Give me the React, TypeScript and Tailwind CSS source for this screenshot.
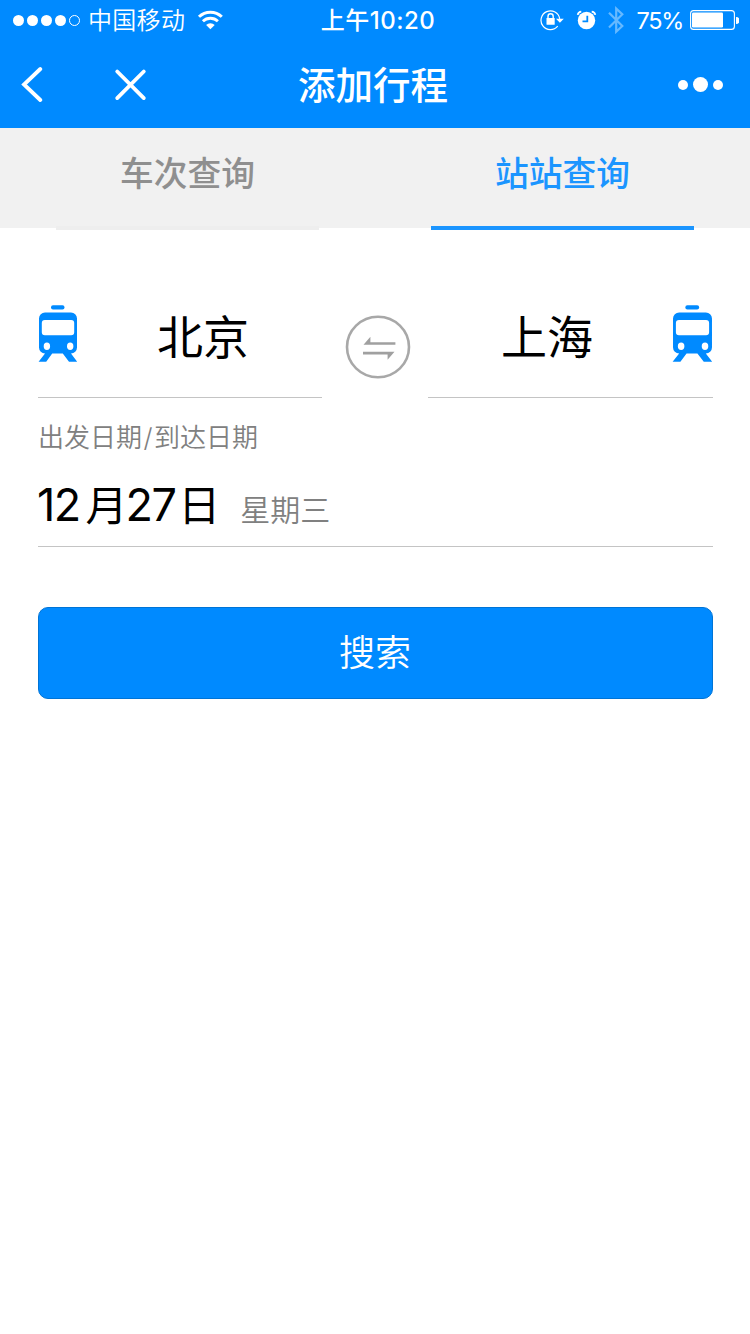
import React from "react";

const SANS = "font-['Inter','Noto_Sans_CJK_SC',sans-serif]";

function StatusBar() {
  return (
    <div className="grid h-10 grid-cols-3 items-center text-white">
      <div className="flex items-center pl-[12px]">
        <svg width="69" height="12" viewBox="0 0 69 12" fill="#fff">
          <circle cx="6.5" cy="6.5" r="5.5" />
          <circle cx="20.5" cy="6.5" r="5.5" />
          <circle cx="34.5" cy="6.5" r="5.5" />
          <circle cx="48.5" cy="6.5" r="5.5" />
          <circle cx="62.5" cy="6.5" r="5" fill="none" stroke="#fff" strokeWidth="1" />
        </svg>
        <span className="ml-[7px] pt-[2px] text-[24px] leading-[38px] tracking-[0.3px] font-[350]">中国移动</span>
        <svg className="ml-[12px]" width="26" height="20" viewBox="0 0 26 20" fill="none" stroke="#fff">
          <path d="M2 6.8a16.3 16.3 0 0 1 22.8 0" strokeWidth="3" />
          <path d="M5.9 11.3a10.7 10.7 0 0 1 15 0" strokeWidth="2.8" />
          <path d="M13.400 19.2l-4.3-4.2a6 6 0 0 1 8.6 0z" fill="#fff" stroke="none" />
        </svg>
      </div>
      <div className="pl-[6px] pt-[2px] text-center text-[24px] font-medium leading-[38px] tracking-[0.5px]">上午10:20</div>
      <div className="flex items-center justify-end pr-[11px]">
        <svg width="24" height="22" viewBox="0 0 24 22" fill="none" stroke="#fff" strokeWidth="1.2">
          <path d="M19.7 9.8A9.4 9.4 0 1 0 17.7 17.2" />
          <path d="M16 9.8h7.8l-3.9 3.9z" fill="#fff" stroke="none" />
          <rect x="6.5" y="9" width="8.2" height="6.8" rx="0.6" fill="#fff" stroke="none" />
          <path d="M8 9.5V7.4a2.6 2.6 0 0 1 5.2 0v2.1" strokeWidth="1.4" />
        </svg>
        <svg className="ml-[12px]" width="21" height="20" viewBox="0 0 21 20" fill="none" stroke="#fff">
          <circle cx="10.5" cy="10.5" r="8.7" fill="#fff" stroke="none" />
          <path d="M1.7 4.9a4 4 0 0 1 3.6-3.3M19.3 4.9a4 4 0 0 0-3.6-3.3" strokeWidth="1.7" />
          <path d="M11.3 5.7v5.6H6.5" stroke="#008aff" strokeWidth="1.8" />
        </svg>
        <svg className="ml-[11px] opacity-40" width="17" height="28" viewBox="0 0 17 28" fill="none" stroke="#fff" strokeWidth="2.2">
          <path d="M1 6.8l13.3 13.2-6.1 5.7V2.6l6.1 5.7L1 21.5" />
        </svg>
        <span className="ml-[11px] pt-[2px] text-[23.5px] leading-[38px] tracking-[-1.3px]">75%</span>
        <svg className="ml-[7px]" width="49" height="20" viewBox="0 0 49 20">
          <rect x="0.6" y="0.6" width="43.8" height="18.8" rx="3" fill="none" stroke="#fff" strokeWidth="1.1" />
          <rect x="2" y="2.5" width="31" height="15" rx="1.3" fill="#fff" />
          <path d="M46 7a3.4 3.4 0 0 1 0 7z" fill="#fff" />
        </svg>
      </div>
    </div>
  );
}

function NavBar() {
  return (
    <div className="grid h-[88px] grid-cols-3 items-center text-white">
      <div className="flex items-center pl-[21px]">
        <svg width="22" height="36" viewBox="0 0 22 36" fill="none" stroke="#fff" strokeWidth="3.8" strokeLinecap="round">
          <path d="M19.3 3L3 18.5l16.3 15.5" />
        </svg>
        <svg className="ml-[71px]" width="33" height="33" viewBox="0 0 33 33" fill="none" stroke="#fff" strokeWidth="3.8" strokeLinecap="round">
          <path d="M3.2 3.5l26.6 26.6M29.8 3.5l-26.6 26.6" />
        </svg>
      </div>
      <h1 className="pr-[4px] pt-[4px] text-center text-[37.5px] font-medium leading-[84px]">添加行程</h1>
      <div className="flex items-center justify-end gap-[5px] pr-[27px] pt-[1px]">
        <span className="size-[10px] rounded-full bg-white" />
        <span className="size-[15px] rounded-full bg-white" />
        <span className="size-[10px] rounded-full bg-white" />
      </div>
    </div>
  );
}

function Tabs() {
  return (
    <div className="grid h-[100px] grid-cols-2 bg-[#f1f1f1] text-[33.7px] font-medium">
      <div className="flex h-[102px] flex-col items-center">
        <span className="h-[98px] leading-[92px] text-[#8f8f8f]">车次查询</span>
        <span className="h-1 w-[263px] bg-[#eeeeee]" />
      </div>
      <div className="flex h-[102px] flex-col items-center">
        <span className="h-[98px] leading-[92px] text-[#1b95ff]">站站查询</span>
        <span className="h-1 w-[263px] bg-[#1b95ff]" />
      </div>
    </div>
  );
}

function Train({ className }: { className: string }) {
  return (
    <svg className={className} height="58" viewBox="0 0 40 58" preserveAspectRatio="none">
      <rect x="13" y="0.3" width="13.5" height="4.2" rx="2" fill="#008aff" />
      <path
        fill="#008aff"
        fillRule="evenodd"
        d="M7 7.6h26a6 6 0 0 1 6 6v29a6 6 0 0 1-6 6l6.2 8.2h-8.2l-6.2-8.2H14.2L8.2 56.8H.6L7 48.6a6 6 0 0 1-6-6v-29a6 6 0 0 1 6-6zM6.8 14.9a3 3 0 0 0-3 3v9.3a3 3 0 0 0 3 3h26.4a3 3 0 0 0 3-3V17.9a3 3 0 0 0-3-3zM8.9 37.6a3.2 3.7 0 1 0 0 7.4a3.2 3.7 0 1 0 0-7.4zM32.2 37.6a3.2 3.7 0 1 0 0 7.4a3.2 3.7 0 1 0 0-7.4z"
      />
    </svg>
  );
}

function Swap() {
  return (
    <svg className="ml-[6px] mt-[26px] block" width="68" height="66" viewBox="0 0 68 66" fill="#a0a0a0">
      <ellipse cx="34" cy="33" rx="31" ry="30.3" fill="none" stroke="#a8a8a8" strokeWidth="2.6" />
      <path d="M19.5 30.8l6.9-8v5.400h25v2.600z" />
      <path d="M50.500 37.700l-6.900 8v-5.300H19v-2.700z" />
    </svg>
  );
}

export default function App() {
  return (
    <div className={`min-h-[1334px] w-[750px] bg-white ${SANS}`}>
      <header className="bg-[#008aff]">
        <StatusBar />
        <NavBar />
      </header>
      <Tabs />
      <main className="pl-[38px] pr-[37px]">
        <section className="flex h-[170px] justify-between pt-[60px] text-[46px] leading-[97px] text-black">
          <div className="flex w-[284px] border-b border-[#c4c4c4]">
            <div className="pt-[17px]"><Train className="block w-[40px]" /></div>
            <span className="ml-[79px] pt-[1px]">北京</span>
          </div>
          <Swap />
          <div className="flex w-[285px] justify-end border-b border-[#c4c4c4]">
            <span className="mr-[79px] pt-[1px]">上海</span>
            <div className="pt-[17px]"><Train className="block w-[41px]" /></div>
          </div>
        </section>
        <section className="h-[149px] border-b border-[#c4c4c4]">
          <div className="pt-[20px] text-[26px] font-[350] leading-[40px] text-[#808080]">
            出发日期<span className="px-[1.5px]">/</span>到达日期
          </div>
          <div className="flex items-baseline pt-[2px] leading-[90px]">
            <span className="flex items-baseline text-[42px] text-black">
              <span className="-ml-px mr-[6px] text-[45px] tracking-[-1.6px]">12</span>月
              <span className="mr-[3px] -ml-[2px] text-[45px] tracking-[-1.6px]">27</span>日
            </span>
            <span className="ml-[20px] text-[30px] font-[350] text-[#808080]">星期三</span>
          </div>
        </section>
        <button className="mt-[60px] block h-[92px] w-full rounded-[10px] border border-[#0074d6] bg-[#008aff] pr-[1px] pt-[1px] text-[36px] font-[350] leading-[89px] text-white">
          搜索
        </button>
      </main>
    </div>
  );
}
